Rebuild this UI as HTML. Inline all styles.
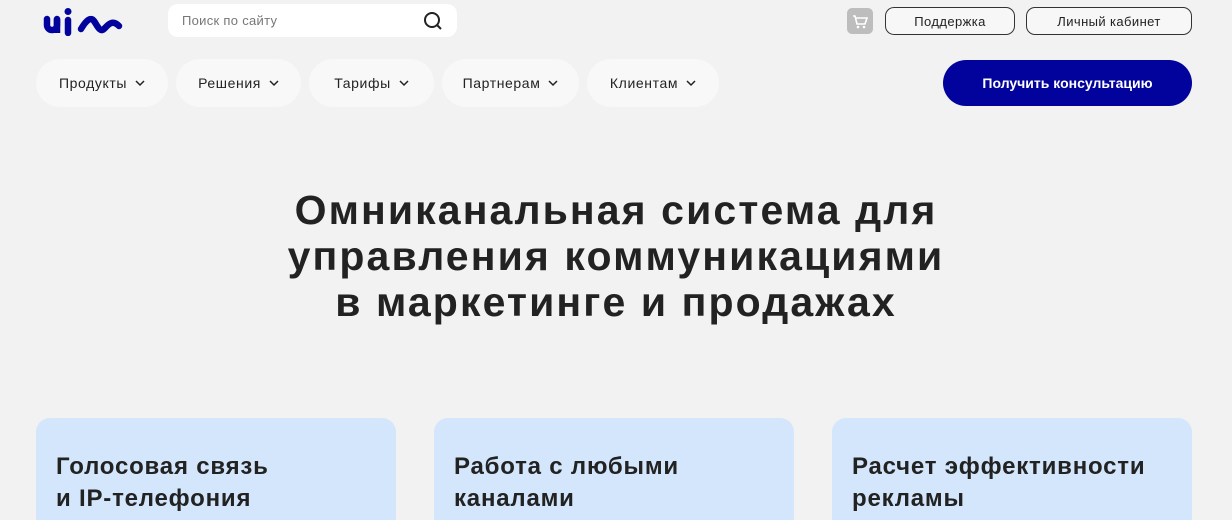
<!DOCTYPE html>
<html><head><meta charset="utf-8"><style>
html,body{margin:0;width:1232px;height:520px;overflow:hidden}
body{background:#f2f2f2;font-family:"Liberation Sans",sans-serif;position:relative;color:#222}
.a{position:absolute}
.search{left:168px;top:4px;width:289px;height:33px;background:#fff;border-radius:10px}
.search span{position:absolute;left:14px;top:9px;font-size:13px;color:#777;letter-spacing:0.3px}
.ob{border:1px solid #333;border-radius:9px;top:7px;font-size:13px;display:flex;align-items:center;justify-content:center;background:#f7f7f7;box-sizing:border-box;height:28px;letter-spacing:0.4px}
.pill{top:59px;height:48px;background:#f8f8f8;border-radius:24px;font-size:14px;display:flex;align-items:center;justify-content:center;gap:8px;letter-spacing:0.6px}
.pill svg{width:10px;height:7px}
.btn{left:943px;top:60px;width:249px;height:46px;background:#02029c;border-radius:23px;color:#fff;font-weight:bold;font-size:14px;display:flex;align-items:center;justify-content:center}
h1{position:absolute;left:0;width:1232px;top:187px;margin:0;text-align:center;font-size:41px;line-height:46px;font-weight:bold;color:#222;letter-spacing:2.1px}
.card{top:418px;width:360px;height:102px;background:#d3e6fb;border-radius:14px 14px 0 0;box-sizing:border-box;padding:33px 20px 0;font-size:24px;line-height:32px;color:#222;font-weight:bold;letter-spacing:0.8px}
</style></head><body>
<svg class="a" style="left:42px;top:8px" width="82" height="28" viewBox="0 0 82 28"><g fill="none" stroke="#02029c" stroke-width="6.5" stroke-linecap="round"><path d="M5 11v6a5 5 0 0 0 10 0v-6"/><path d="M26 12v13"/><path d="M39 21c6-10 10-12 13-8s6 12 10 8 8-10 15-3"/></g><circle cx="26" cy="3.5" r="3.5" fill="#02029c"/><path d="M15 11v14" stroke="#02029c" stroke-width="6.5"/></svg>
<div class="a search"><span>Поиск по сайту</span><svg class="a" style="left:255px;top:7px" width="20" height="20" viewBox="0 0 20 20"><circle cx="9" cy="9" r="7" fill="none" stroke="#222" stroke-width="2"/><path d="M14 14l4 4" stroke="#222" stroke-width="2"/></svg></div>
<div class="a" style="left:847px;top:8px;width:26px;height:26px;background:#bdbdbd;border-radius:5px"><svg width="26" height="26" viewBox="0 0 26 26"><path d="M6 8h2l2 8h8l2-6H9" fill="none" stroke="#fff" stroke-width="1.6"/><circle cx="11" cy="19" r="1.3" fill="#fff"/><circle cx="17" cy="19" r="1.3" fill="#fff"/></svg></div>
<div class="a ob" style="left:885px;width:130px">Поддержка</div>
<div class="a ob" style="left:1026px;width:166px">Личный кабинет</div>
<div class="a pill" style="left:36px;width:132px">Продукты <svg viewBox="0 0 10 7"><path d="M1 1l4 4 4-4" fill="none" stroke="#222" stroke-width="1.5"/></svg></div>
<div class="a pill" style="left:176px;width:125px">Решения <svg viewBox="0 0 10 7"><path d="M1 1l4 4 4-4" fill="none" stroke="#222" stroke-width="1.5"/></svg></div>
<div class="a pill" style="left:309px;width:125px">Тарифы <svg viewBox="0 0 10 7"><path d="M1 1l4 4 4-4" fill="none" stroke="#222" stroke-width="1.5"/></svg></div>
<div class="a pill" style="left:442px;width:137px">Партнерам <svg viewBox="0 0 10 7"><path d="M1 1l4 4 4-4" fill="none" stroke="#222" stroke-width="1.5"/></svg></div>
<div class="a pill" style="left:587px;width:132px">Клиентам <svg viewBox="0 0 10 7"><path d="M1 1l4 4 4-4" fill="none" stroke="#222" stroke-width="1.5"/></svg></div>
<div class="a btn">Получить консультацию</div>
<h1>Омниканальная система для<br>управления коммуникациями<br>в маркетинге и продажах</h1>
<div class="a card" style="left:36px">Голосовая связь<br>и IP-телефония</div>
<div class="a card" style="left:434px">Работа с любыми<br>каналами</div>
<div class="a card" style="left:832px">Расчет эффективности<br>рекламы</div>
</body></html>
